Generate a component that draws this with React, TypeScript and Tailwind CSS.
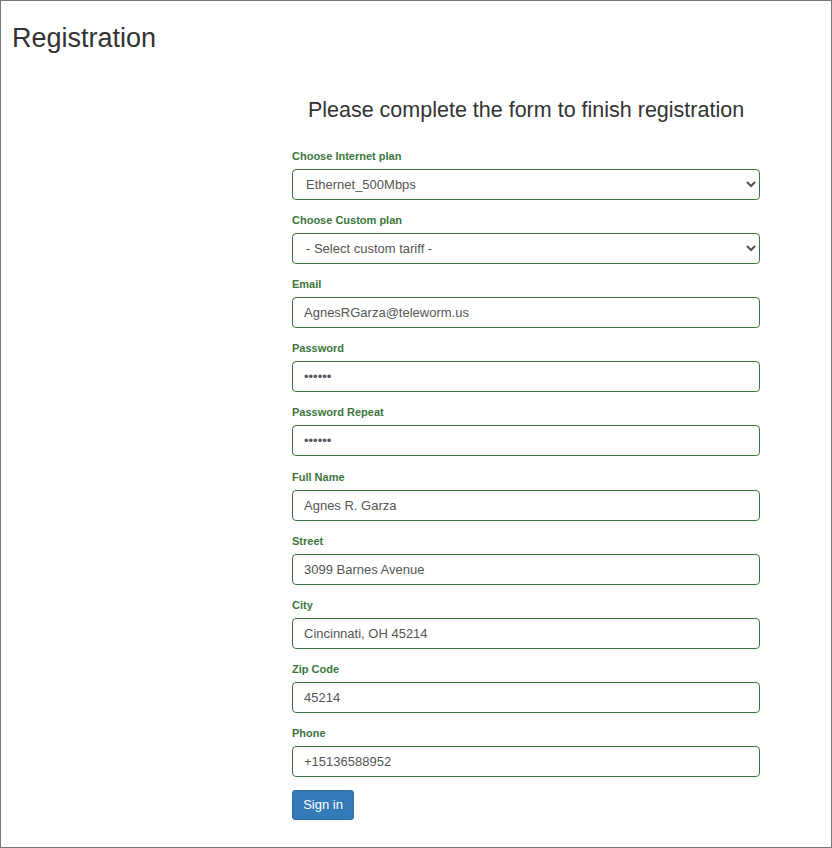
import React from "react";

const labelCls = "block text-[11px] font-bold leading-[13px] text-[#3c763d] mb-[6px]";
const inputCls =
  "block w-full h-[31px] rounded-[4px] border border-[#3c763d] bg-white pl-[11px] pr-[8px] text-[13px] text-[#555] outline-none";

function Field({
  label,
  value,
  type = "text",
  gap = "mb-[14.12px]",
}: {
  label: string;
  value: string;
  type?: string;
  gap?: string;
}) {
  return (
    <div className={gap}>
      <label className={labelCls}>{label}</label>
      <input type={type} defaultValue={value} className={inputCls} />
    </div>
  );
}

function SelectField({ label, options }: { label: string; options: string[] }) {
  return (
    <div className="mb-[14.12px]">
      <label className={labelCls}>{label}</label>
      <select
        defaultValue={options[0]}
        className="block w-full h-[31px] rounded-[4px] border border-[#3c763d] bg-white pl-[9px] pr-[4px] text-[13px] text-[#555] outline-none"
      >
        {options.map((o) => (
          <option key={o}>{o}</option>
        ))}
      </select>
    </div>
  );
}

export default function App() {
  return (
    <div className="w-[832px] h-[848px] border border-[#777] bg-white font-['Liberation_Sans',Arial,sans-serif] text-[#333]">
      <h1 className="ml-[11px] mt-[23px] text-[27px] leading-[29px] font-normal">Registration</h1>

      <div className="ml-[291px] mt-[45px] w-[468px]">
        <h2 className="mb-[28px] text-center text-[21.5px] leading-[24px] font-normal">
          Please complete the form to finish registration
        </h2>

        <SelectField label="Choose Internet plan" options={["Ethernet_500Mbps"]} />
        <SelectField label="Choose Custom plan" options={["- Select custom tariff -"]} />
        <Field label="Email" value="AgnesRGarza@teleworm.us" />
        <Field label="Password" value="123456" type="password" />
        <Field label="Password Repeat" value="123456" type="password" />
        <Field label="Full Name" value="Agnes R. Garza" />
        <Field label="Street" value="3099 Barnes Avenue" />
        <Field label="City" value="Cincinnati, OH 45214" />
        <Field label="Zip Code" value="45214" />
        <Field label="Phone" value="+15136588952" gap="mb-[13px]" />

        <button
          type="button"
          className="h-[30px] w-[62px] rounded-[3px] border border-[#2e6da4] bg-[#337ab7] text-[13px] leading-[18px] text-white"
        >
          Sign in
        </button>
      </div>
    </div>
  );
}
